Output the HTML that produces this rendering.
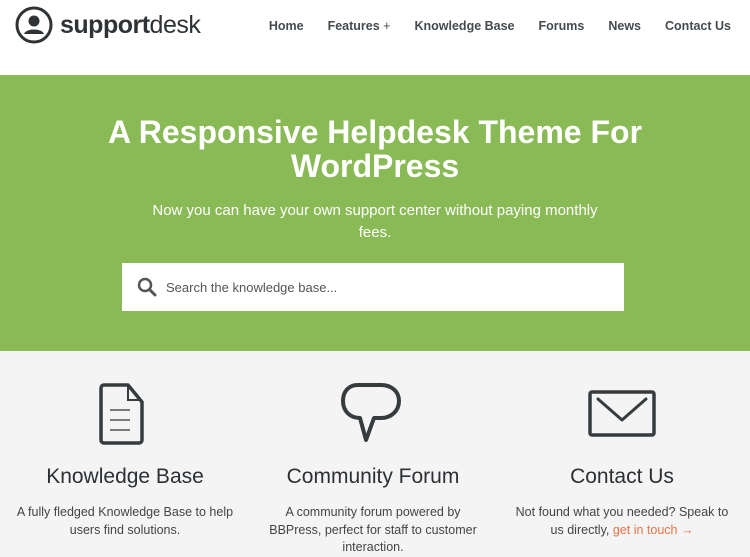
<!DOCTYPE html>
<html><head><meta charset="utf-8"><style>
*{margin:0;padding:0;box-sizing:border-box}
body{width:750px;height:557px;overflow:hidden;font-family:"Liberation Sans",sans-serif;background:#f4f4f4;color:#333}
.hdr{height:75px;background:#fff;position:relative}
.logo{position:absolute;left:15px;top:6px;display:flex;align-items:center}
.logo span{font-size:25px;color:#2f3336;margin-left:7px;letter-spacing:-0.5px}
.nav{position:absolute;top:19px;right:19px;font-size:12.5px;font-weight:bold;color:#454a4e}
.nav a{margin-left:24px}
.hero{height:276px;background:#8aba56;text-align:center;color:#fff;position:relative}
h1{font-size:32px;line-height:34px;position:absolute;top:40px;width:100%}
.sub{position:absolute;top:125px;left:0;width:100%;font-size:15px;line-height:22px}
.search{position:absolute;left:122px;top:188px;width:502px;height:48px;background:#fff;text-align:left;color:#555;font-size:13px;padding:17px 0 0 44px}
.col{position:absolute;text-align:center;width:250px}
.col h2{font-size:21px;font-weight:normal;color:#2c3034}
.col p{font-size:12.5px;line-height:17.5px;color:#444;margin-top:15px}
</style></head><body>
<div class="hdr">
 <div class="logo"><svg width="38" height="38" viewBox="0 0 38 38"><circle cx="19" cy="19" r="17" fill="none" stroke="#2f3336" stroke-width="3"/><circle cx="19" cy="15" r="5.5" fill="#2f3336"/><path d="M9 28c2-6 18-6 20 0z" fill="#2f3336"/></svg><span><b>support</b>desk</span></div>
 <div class="nav"><a>Home</a><a>Features <span style="font-weight:normal">+</span></a><a>Knowledge Base</a><a>Forums</a><a>News</a><a>Contact Us</a></div>
</div>
<div class="hero">
 <h1>A Responsive Helpdesk Theme For<br>WordPress</h1>
 <div class="sub">Now you can have your own support center without paying monthly<br>fees.</div>
 <div class="search"><svg style="position:absolute;left:15px;top:14px" width="20" height="20" viewBox="0 0 20 20"><circle cx="8" cy="8" r="6" fill="none" stroke="#555" stroke-width="2.5"/><path d="M12.5 12.5l5.5 5.5" stroke="#555" stroke-width="3" stroke-linecap="round"/></svg>Search the knowledge base...</div>
</div>
<svg style="position:absolute;left:98px;top:382px" width="52" height="64" viewBox="0 0 52 64"><path d="M6 3h24l14 17v38a3 3 0 0 1-3 3H6a3 3 0 0 1-3-3V6a3 3 0 0 1 3-3z" fill="none" stroke="#363b3e" stroke-width="3.5" stroke-linejoin="round"/><path d="M30 3v15h14" fill="none" stroke="#363b3e" stroke-width="2"/><path d="M12 28h20M12 38h20M12 48h20" stroke="#555" stroke-width="1.5"/></svg>
<svg style="position:absolute;left:341px;top:382px" width="62" height="62" viewBox="0 0 62 62"><path d="M17 3h23c10 0 18 6 18 16s-8 17-18 17h-7l-8 22-6-22c-10 0-17-7-17-17S8 3 17 3z" fill="none" stroke="#363b3e" stroke-width="4" stroke-linejoin="round"/></svg>
<svg style="position:absolute;left:588px;top:390px" width="68" height="48" viewBox="0 0 68 48"><rect x="2" y="2" width="64" height="43" rx="2" fill="none" stroke="#363b3e" stroke-width="3.5"/><path d="M10 9l24 21 24-21" fill="none" stroke="#363b3e" stroke-width="3" stroke-linecap="round" stroke-linejoin="round"/></svg>
<div class="col" style="left:0;top:465px"><h2>Knowledge Base</h2><p>A fully fledged Knowledge Base to help<br>users find solutions.</p></div>
<div class="col" style="left:248px;top:465px"><h2>Community Forum</h2><p>A community forum powered by<br>BBPress, perfect for staff to customer<br>interaction.</p></div>
<div class="col" style="left:497px;top:465px"><h2>Contact Us</h2><p>Not found what you needed? Speak to<br>us directly, <span style="color:#e8734a">get in touch →</span></p></div>
</body></html>
